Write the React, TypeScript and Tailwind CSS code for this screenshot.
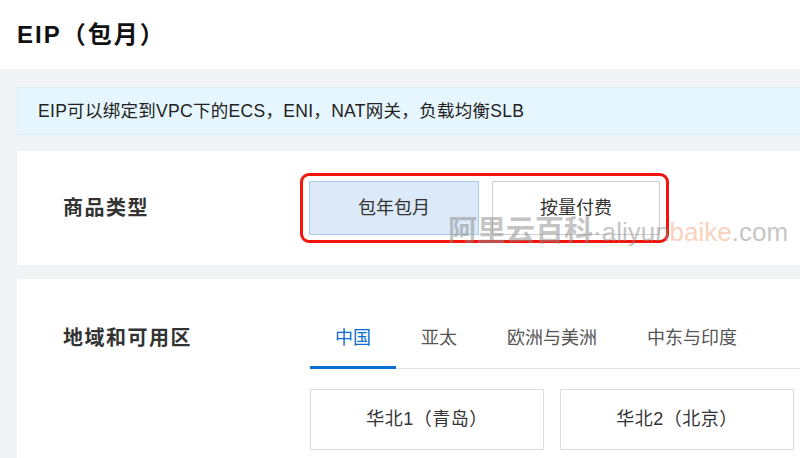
import React from "react";

const font = {
  fontFamily: '"Helvetica Neue", "Liberation Sans", "Noto Sans CJK SC", sans-serif',
};

const tabs = ["中国", "亚太", "欧洲与美洲", "中东与印度"];
const regions = ["华北1（青岛）", "华北2（北京）"];

export default function App() {
  return (
    <div
      className="w-[800px] h-[458px] overflow-hidden bg-[#f2f3f5] text-[#333]"
      style={font}
    >
      {/* Page title */}
      <div className="h-[69px] bg-white pl-[17px] flex items-center">
        <h1 className="text-[24px] font-bold text-[#111] tracking-[2px]">EIP（包月）</h1>
      </div>

      <div className="pl-[17px] pt-[18px] flex flex-col">
        {/* Notice */}
        <div className="h-[48px] bg-[#e6f6fe] border border-r-0 border-[#d9eef9] flex items-center pl-[20px] text-[17.5px] tracking-[0.3px] text-[#222]">
          EIP可以绑定到VPC下的ECS，ENI，NAT网关，负载均衡SLB
        </div>

        {/* 商品类型 */}
        <div className="relative mt-[16px] h-[114px] bg-white shadow-[0_0_2px_rgba(0,0,0,0.06)] flex items-center pl-[46px]">
          <div className="w-[237px] text-[20px] font-bold text-[#333] tracking-[1.5px]">商品类型</div>
          <div className="flex gap-[13px] border-[3px] border-[#f5140c] rounded-[9px] px-[6px] py-[5px]">
            <button className="w-[170px] h-[54px] bg-[#dbe9f8] border border-[#a8cdf0] text-[18px] text-[#333]">
              包年包月
            </button>
            <button className="w-[168px] h-[54px] bg-white border border-[#cfcfcf] text-[18px] text-[#333]">
              按量付费
            </button>
          </div>

          {/* watermark */}
          <div className="absolute left-[431px] top-[66px] flex items-baseline pointer-events-none select-none">
            <span className="text-[29px] font-bold text-[#8a8a8a]/50 leading-none">阿里云百科</span>
            <span className="text-[26px] text-[#8a8a8a]/50 leading-none">·aliyun</span>
            <span className="text-[26px] text-[#f4a37a]/50 leading-none">baike</span>
            <span className="text-[26px] text-[#8a8a8a]/50 leading-none">.com</span>
          </div>
        </div>

        {/* 地域和可用区 */}
        <div className="mt-[14px] h-[200px] bg-white flex pl-[46px] pt-[40px]">
          <div className="w-[247px] h-[38px] leading-[38px] text-[20px] font-bold text-[#333] tracking-[1.5px]">
            地域和可用区
          </div>
          <div className="flex-1 flex flex-col">
            <div className="flex border-b border-[#e3e3e3]">
              {tabs.map((t, i) => (
                <div
                  key={t}
                  className={
                    i === 0
                      ? "px-[25px] h-[38px] leading-[38px] pb-[9px] box-content -mb-px border-b-[3px] border-[#0a6fd0] text-[18px] text-[#0a6fd0]"
                      : "px-[25px] h-[38px] leading-[38px] pb-[9px] box-content -mb-px border-b-[3px] border-transparent text-[18px] text-[#555]"
                  }
                >
                  {t}
                </div>
              ))}
            </div>
            <div className="flex gap-[16px] mt-[20px]">
              {regions.map((r) => (
                <div
                  key={r}
                  className="w-[234px] h-[61px] border border-[#dcdcdc] flex items-center justify-center text-[18px] tracking-[0.5px] text-[#333]"
                >
                  {r}
                </div>
              ))}
            </div>
          </div>
        </div>
      </div>
    </div>
  );
}
